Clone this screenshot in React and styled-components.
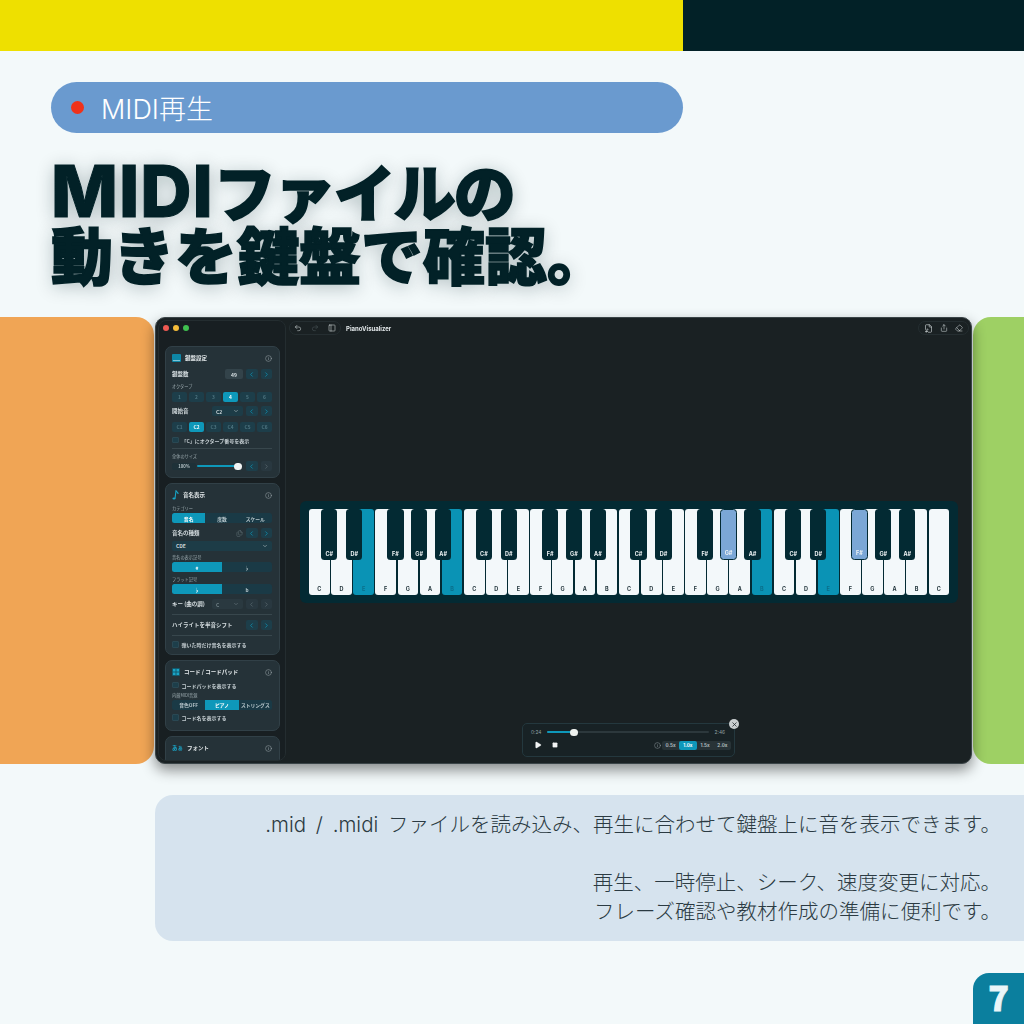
import React from 'react';
import styled, { createGlobalStyle } from 'styled-components';
import { Undo2, Redo2, PanelLeft, Info, ChevronLeft, ChevronRight, ChevronDown, Play, Square, X, Share, Eraser, FileMusic, Files } from 'lucide-react';

const Global = createGlobalStyle`
  html, body { margin: 0; padding: 0; background: #f3f9fa; }
  * { box-sizing: border-box; }
  body { font-family: "Noto Sans CJK JP", "Noto Sans", sans-serif; }
`;
const Page = styled.div`width: 1024px; height: 1024px; background: #f3f9fa; overflow: hidden; display: flex; flex-direction: column;`;
const TopBand = styled.div`height: 51px; flex: none; display: flex;`;
const Yellow = styled.div`width: 683px; background: #eee000;`;
const Dark = styled.div`flex: 1; background: #022127;`;
const Pill = styled.div`
  margin: 31px 0 0 51px; width: 632px; height: 51px; flex: none; border-radius: 26px; background: #6a9acf;
  display: flex; align-items: center; gap: 17px; padding-left: 20px;
  color: #fff; font-family: "Inter", "Noto Sans CJK JP", sans-serif; font-size: 27px; font-weight: 300;
`;
const Dot = styled.span`width: 13px; height: 13px; border-radius: 50%; background: #f0321a;`;
const Title = styled.h1`
  margin: 26px 0 0 51px; height: 126px; flex: none; font-size: 62px; line-height: 62px; font-weight: 900; color: #022127;
  -webkit-text-stroke: 1.6px #022127; text-shadow: 0 3px 18px rgba(2,33,39,.3); white-space: nowrap;
`;
const Latin = styled.span`font-family: "Inter", sans-serif; font-size: 71px; font-weight: 800; line-height: 62px; letter-spacing: 1px; -webkit-text-stroke: 1px #022127;`;
const Kana = styled.span`letter-spacing: -2px;`;
const Stage = styled.div`margin-top: 32px; height: 447px; flex: none; display: grid; grid-template-columns: 154px 819px 51px;`;
const SideBlock = styled.div`background: ${p => p.$c}; border-radius: ${p => p.$r};`;
const Window = styled.div`
  position: relative; margin-left: 1px; width: 817px; background: #1a2123; border-radius: 10px; border: 1px solid #3a4447;
  box-shadow: 0 6px 14px rgba(0,0,0,.45); display: flex; overflow: hidden; padding: 2px; filter: blur(.3px);
`;
const Sidebar = styled.aside`width: 128px; flex: none; background: #181f22; border: 1px solid #242d30; border-radius: 8px; overflow: hidden; padding: 0 6px;`;
const Lights = styled.div`height: 14px; margin: 0 0 11px -2px; display: flex; align-items: center; gap: 4px;`;
const Light = styled.i`width: 6px; height: 6px; border-radius: 50%; background: ${p => p.$c};`;
const Card = styled.section`
  width: 115px; height: ${p => p.$h}px; flex: none; margin-bottom: 5px; padding: 4px 7px 0 6px;
  background: #253238; border: 1px solid #314047; border-radius: 7px; color: #d5dde0; overflow: hidden;
  display: flex; flex-direction: column;
  &:last-child { margin-bottom: 0; }
`;
const Head = styled.div`height: 14px; flex: none; display: flex; align-items: center; gap: 4px; font-size: 5.5px; font-weight: 700; color: #e3e8ea;`;
const Grow = styled.span`flex: 1;`;
const Row = styled.div`height: ${p => p.$h || 10}px; margin-top: ${p => p.$mt || 0}px; flex: none; display: flex; align-items: center; gap: 3px; font-size: 5.5px; font-weight: 700; color: #d5dde0; white-space: nowrap;`;
const Tiny = styled.div`height: 6px; margin-top: ${p => p.$mt || 0}px; flex: none; line-height: 6px; font-size: 4.2px; color: #9aa8ad; white-space: nowrap;`;
const Step = styled.span`
  width: 11.5px; height: 9.5px; border-radius: 2px; flex: none; display: flex; align-items: center; justify-content: center;
  background: ${p => p.$off ? '#293840' : '#1d3e4a'}; color: ${p => p.$off ? '#5a6a70' : '#0f95b7'};
`;
const Value = styled.span`width: 18px; height: 10px; background: #33434a; border-radius: 2px; display: flex; align-items: center; justify-content: center; font-size: 5px;`;
const Select = styled.span`
  width: ${p => p.$w ? p.$w + 'px' : '100%'}; height: 10px; margin-top: ${p => p.$mt || 0}px; border-radius: 2px; padding: 0 4px; flex: none;
  background: ${p => p.$off ? '#2a3940' : '#1d3c47'}; color: ${p => p.$off ? '#75858b' : '#cdd7da'};
  display: flex; align-items: center; justify-content: space-between; font-size: 5px; font-weight: 700;
`;
const Nums = styled.div`height: 9.5px; margin-top: ${p => p.$mt || 0}px; flex: none; display: grid; grid-template-columns: repeat(6, 1fr); gap: 2px;`;
const Num = styled.span`
  border-radius: 2px; display: flex; align-items: center; justify-content: center; font-size: 4.8px; font-weight: 700;
  background: ${p => p.$on ? '#0e98ba' : '#1d3e4a'}; color: ${p => p.$on ? '#fff' : '#4f7682'};
`;
const Check = styled.div`height: 8px; margin-top: ${p => p.$mt || 0}px; flex: none; display: flex; align-items: center; gap: 3px; font-size: 5px; font-weight: 700; color: #c5ced2; white-space: nowrap;`;
const Box = styled.i`width: 6.5px; height: 6.5px; flex: none; border-radius: 1px; background: #1d3e4a; border: 1px solid #2a4853;`;
const Divider = styled.hr`height: 1px; margin: ${p => p.$mt || 0}px 0 0; border: 0; flex: none; background: #38474d;`;
const Seg = styled.div`height: 10px; margin-top: ${p => p.$mt || 0}px; flex: none; display: flex; border-radius: 2.5px; overflow: hidden; background: #1a3a46;`;
const SegItem = styled.span`
  flex: 1; display: flex; align-items: center; justify-content: center; font-size: 4.8px; font-weight: 700; white-space: nowrap;
  background: ${p => p.$on ? '#0e98ba' : 'transparent'}; color: ${p => p.$on ? '#fff' : '#b7c6cb'};
`;
const Chip = styled.span`width: 24px; height: 7px; background: #1e3138; border-radius: 2px; display: flex; align-items: center; justify-content: center; font-size: 4.2px; color: #b7c4c8;`;
const Slide = styled.span`position: relative; flex: 1; height: 2px; background: #0e98ba; border-radius: 1px; margin: 0 5px 0 -2px;`;
const Thumb = styled.i`position: absolute; right: -4px; top: -2.5px; width: 8px; height: 7px; background: #f2f4f4; border-radius: 4px;`;

const Main = styled.main`position: relative; flex: 1; display: flex; flex-direction: column; min-width: 0;`;
const TopBar = styled.header`height: 16px; flex: none; display: flex; align-items: center; padding-left: 3px; color: #d8dfe1;`;
const IconPill = styled.div`height: 14px; border-radius: 7px; border: 1px solid #252e31; display: flex; align-items: center; gap: ${p => p.$gap}px; padding: 0 ${p => p.$pad}px;`;
const AppName = styled.span`margin-left: 5px; font-size: 6px; font-weight: 700; color: #e2e7e9; font-family: "Inter", "Noto Sans", sans-serif;`;
const Center = styled.div`flex: 1; display: flex; align-items: center; justify-content: center; padding: 6px 0 0 3px;`;
const Keys = styled.div`width: 658px; height: 102px; padding: 8px 9px; background: #032a33; border-radius: 6px;`;
const Bed = styled.div`position: relative; height: 86px; display: flex; gap: 1.5px;`;
const White = styled.div`
  flex: 1; border-radius: 3px; display: flex; align-items: flex-end; justify-content: center; padding-bottom: 3px;
  background: ${p => p.$on ? '#0a93b5' : '#f3f8fa'}; color: ${p => p.$on ? '#0b6f8b' : '#1c2f36'};
  font: 700 5.5px "Inter", "Noto Sans", sans-serif;
`;
const Black = styled.div`
  position: absolute; top: 0; width: 16.4px; height: 51px; border-radius: 3.5px; display: flex; align-items: flex-end; justify-content: center; padding-bottom: 3px;
  background: ${p => p.$on ? '#7ba7d6' : '#032a33'}; border: ${p => p.$on ? '1px solid #032a33' : '0'}; color: #f0f4f6;
  font: 700 5.5px "Inter", "Noto Sans", sans-serif;
`;
const Transport = styled.div`
  position: absolute; left: 236px; bottom: 4px; width: 213px; height: 34px; padding: 4px 9px 0 8px; border-radius: 5px;
  border: 1px solid #24383e; background: #182225; color: #f3f5f5; display: flex; flex-direction: column; gap: 3px;
`;
const TimeRow = styled.div`height: 8px; display: flex; align-items: center; gap: 6px; font: 400 4.8px "Inter", sans-serif; color: #93a1a6;`;
const Track = styled.span`position: relative; flex: 1; height: 2px; background: #2c383c; border-radius: 1px;`;
const Fill = styled.i`position: absolute; left: 0; top: 0; height: 2px; background: #0e98ba; border-radius: 1px;`;
const Knob = styled.i`position: absolute; top: -2.5px; width: 8px; height: 7px; margin-left: -4px; background: #eef1ee; border-radius: 4px;`;
const Ctl = styled.div`height: 12px; display: flex; align-items: center; gap: 10px; padding-left: 3px;`;
const Speeds = styled.div`display: flex; width: 69px; height: 9px; background: #283337; border-radius: 2px; margin: 0 -6px 0 -9px;`;
const Speed = styled.span`flex: 1; display: flex; align-items: center; justify-content: center; border-radius: 2px; font: 700 4.6px "Inter", sans-serif; background: ${p => p.$on ? '#0e98ba' : 'transparent'}; color: ${p => p.$on ? '#fff' : '#aeb9bd'};`;
const Close = styled.span`position: absolute; left: 443px; bottom: 32px; width: 10px; height: 10px; border-radius: 50%; background: #c9cecf; color: #1b2326; display: flex; align-items: center; justify-content: center;`;
const Desc = styled.div`
  margin: 31px 0 0 155px; height: 146px; flex: none; padding: 15px 23px 0 0; background: #d6e3ee; border-radius: 18px 0 0 18px;
  text-align: right; font-family: "Inter", "Noto Sans CJK JP", sans-serif; font-size: 20.5px; line-height: 29px; font-weight: 300; word-spacing: 4px; color: #2b3a42; white-space: pre-line;
`;
const Footer = styled.div`margin-top: 32px; height: 51px; flex: none; display: flex; justify-content: flex-end;`;
const Badge = styled.div`width: 51px; height: 51px; padding-bottom: 3px; background: #0b7f9e; border-radius: 16px 0 0 0; color: #eaf5f8; display: flex; align-items: center; justify-content: center; font: 900 34px/1 "Noto Sans CJK JP", sans-serif; -webkit-text-stroke: .8px #eaf5f8;`;

const names = ['C', 'D', 'E', 'F', 'G', 'A', 'B'];
const whites = Array.from({ length: 29 }, (_, i) => ({ n: names[i % 7], on: [2, 6, 20, 23].includes(i) }));
const blackOffsets = [[12, 'C#'], [37, 'D#'], [78.2, 'F#'], [102, 'G#'], [126, 'A#']];
const blacks = [0, 1, 2, 3].flatMap(o => blackOffsets.map(([x, n]) => ({ x: x + o * 154.7, n, on: (o === 2 && n === 'G#') || (o === 3 && n === 'F#') })));

const L = () => <ChevronLeft size={7} strokeWidth={2.5} />;
const R = () => <ChevronRight size={7} strokeWidth={2.5} />;
const Steps = ({ off, offR }) => <><Step $off={off}><L /></Step><Step $off={off || offR}><R /></Step></>;
const Down = () => <ChevronDown size={6} strokeWidth={2} />;
const I = () => <Info size={7} color="#a7b1b5" strokeWidth={1.6} />;
const PianoIcon = () => (
  <svg width="9" height="8" viewBox="0 0 9 8"><rect x="0" y="0" width="9" height="8" rx="1" fill="#0e86a6" /><rect x="1" y="6" width="7" height="1" fill="#7fc4d6" /></svg>
);
const NoteIcon = () => (
  <svg width="7" height="10" viewBox="0 0 7 10" fill="none"><path d="M3 8.5 L4 .8 C4.6 2 6.4 2.2 6 4" stroke="#17a6c8" strokeWidth="1.1" /><ellipse cx="2" cy="8.5" rx="1.6" ry="1.1" fill="#17a6c8" /></svg>
);
const PadIcon = () => (
  <svg width="8" height="8" viewBox="0 0 8 8"><rect width="8" height="8" rx="1" fill="#125a6e" /><g fill="#1aa4c6"><rect x="1" y="1" width="2.5" height="2.5" /><rect x="4.5" y="1" width="2.5" height="2.5" /><rect x="1" y="4.5" width="2.5" height="2.5" /><rect x="4.5" y="4.5" width="2.5" height="2.5" /></g></svg>
);
const FontMark = styled.span`color: #1aa4c6;`;

export default function App() {
  return (
    <Page>
      <Global />
      <TopBand><Yellow /><Dark /></TopBand>
      <Pill><Dot />MIDI再生</Pill>
      <Title><Latin>MIDI</Latin><Kana>ファイルの</Kana><br />動きを鍵盤で確認。</Title>
      <Stage>
        <SideBlock $c="#f0a555" $r="0 18px 18px 0" />
        <Window>
          <Sidebar>
            <Lights><Light $c="#ee5a52" /><Light $c="#f6bd3a" /><Light $c="#3fc04f" /></Lights>
            <Card $h={132}>
              <Head><PianoIcon />鍵盤設定<Grow /><I /></Head>
              <Row $mt={4}>鍵盤数<Grow /><Value>49</Value><Steps /></Row>
              <Tiny $mt={4}>オクターブ</Tiny>
              <Nums $mt={3}>{['1', '2', '3', '4', '5', '6'].map(n => <Num key={n} $on={n === '4'}>{n}</Num>)}</Nums>
              <Row $mt={4.5}>開始音<Grow /><Select $w={31}>C2<Down /></Select><Steps /></Row>
              <Nums $mt={6}>{['C1', 'C2', 'C3', 'C4', 'C5', 'C6'].map(n => <Num key={n} $on={n === 'C2'}>{n}</Num>)}</Nums>
              <Check $mt={4.5}><Box />「C」にオクターブ番号を表示</Check>
              <Divider $mt={4} />
              <Tiny $mt={4}>全体のサイズ</Tiny>
              <Row $mt={2}><Chip>100%</Chip><Slide><Thumb /></Slide><Steps offR /></Row>
            </Card>
            <Card $h={172}>
              <Head><NoteIcon />音名表示<Grow /><I /></Head>
              <Tiny $mt={3}>カテゴリー</Tiny>
              <Seg $mt={2}><SegItem $on>音名</SegItem><SegItem>度数</SegItem><SegItem>スケール</SegItem></Seg>
              <Row $mt={5}>音名の種類<Grow /><Files size={7} color="#5d6c72" strokeWidth={2} /><Steps /></Row>
              <Select $mt={2.5}>CDE<Down /></Select>
              <Tiny $mt={3.5}>音名の表示記号</Tiny>
              <Seg $mt={2}><SegItem $on>#</SegItem><SegItem>♭</SegItem></Seg>
              <Tiny $mt={4}>フラット記号</Tiny>
              <Seg $mt={2}><SegItem $on>♭</SegItem><SegItem>b</SegItem></Seg>
              <Row $mt={5}>キー (曲の調)<Grow /><Select $w={31} $off>C<Down /></Select><Steps off /></Row>
              <Divider $mt={5} />
              <Row $mt={5}>ハイライトを半音シフト<Grow /><Steps /></Row>
              <Divider $mt={5} />
              <Check $mt={4.5}><Box />弾いた時だけ音名を表示する</Check>
            </Card>
            <Card $h={71}>
              <Head><PadIcon />コード / コードパッド<Grow /><I /></Head>
              <Check $mt={2}><Box />コードパッドを表示する</Check>
              <Tiny $mt={3}>内蔵MIDI音源</Tiny>
              <Seg $mt={1.5}><SegItem>音色OFF</SegItem><SegItem $on>ピアノ</SegItem><SegItem>ストリングス</SegItem></Seg>
              <Check $mt={4}><Box />コード名を表示する</Check>
            </Card>
            <Card $h={60}>
              <Head><FontMark>あぁ</FontMark>フォント<Grow /><I /></Head>
              <Tiny $mt={4}>フォント</Tiny>
            </Card>
          </Sidebar>
          <Main>
            <TopBar>
              <IconPill $gap={9} $pad={4}><Undo2 size={8} strokeWidth={1.6} /><Redo2 size={8} strokeWidth={1.6} color="#4d585c" /><PanelLeft size={8} strokeWidth={1.6} /></IconPill>
              <AppName>PianoVisualizer</AppName>
              <Grow />
              <IconPill $gap={7} $pad={5}><FileMusic size={9} strokeWidth={1.6} /><Share size={8} strokeWidth={1.6} /><Eraser size={8} strokeWidth={1.6} /></IconPill>
            </TopBar>
            <Center>
              <Keys>
                <Bed>
                  {whites.map((k, i) => <White key={i} $on={k.on}>{k.n}</White>)}
                  {blacks.map((k, i) => <Black key={i} $on={k.on} style={{ left: k.x }}>{k.n}</Black>)}
                </Bed>
              </Keys>
            </Center>
            <Transport>
              <TimeRow>0:24<Track><Fill style={{ width: 27 }} /><Knob style={{ left: 27 }} /></Track>2:46</TimeRow>
              <Ctl>
                <Play size={8} fill="#f3f5f5" strokeWidth={1} />
                <Square size={6} fill="#f3f5f5" strokeWidth={1} />
                <Grow />
                <Info size={7} color="#a7b1b5" strokeWidth={1.4} />
                <Speeds><Speed>0.5x</Speed><Speed $on>1.0x</Speed><Speed>1.5x</Speed><Speed>2.0x</Speed></Speeds>
              </Ctl>
            </Transport>
            <Close><X size={7} strokeWidth={2.5} /></Close>
          </Main>
        </Window>
        <SideBlock $c="#9ed064" $r="18px 0 0 18px" />
      </Stage>
      <Desc>{`.mid / .midi ファイルを読み込み、再生に合わせて鍵盤上に音を表示できます。

再生、一時停止、シーク、速度変更に対応。
フレーズ確認や教材作成の準備に便利です。`}</Desc>
      <Footer><Badge>7</Badge></Footer>
    </Page>
  );
}
